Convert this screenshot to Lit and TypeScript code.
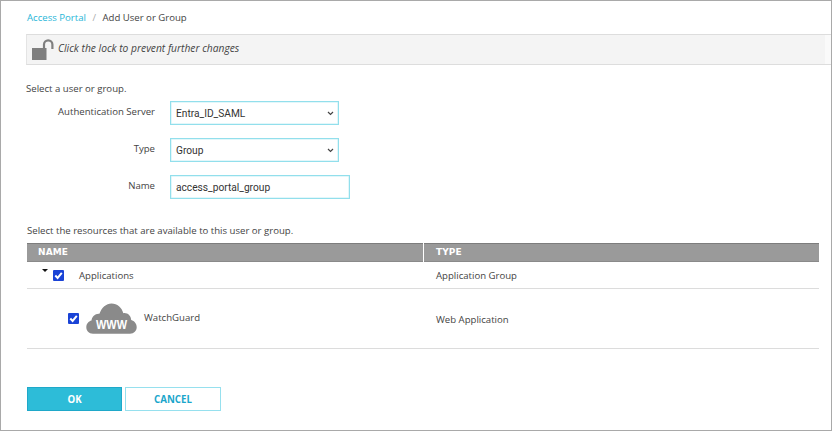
import { LitElement, html, css } from "lit";
import { customElement } from "lit/decorators.js";

const chevron = html`<svg class="chev" width="7" height="5" viewBox="0 0 7 5"><path d="M1 1l2.500 2.500L6 1" fill="none" stroke="#444" stroke-width="1.200"/></svg>`;
const check = html`<span class="cb"><svg width="11" height="11" viewBox="0 0 11 11"><path d="M2.300 5.500l2.300 2.400 4.200-5" fill="none" stroke="#fff" stroke-width="2"/></svg></span>`;

@customElement("app-root")
export class AppRoot extends LitElement {
  static styles = css`
    :host { display: block; width: 832px; height: 431px; box-sizing: border-box; border: 1px solid #a9a9a9; background: #fff; font-family: "Open Sans", sans-serif; font-size: 9.600px; color: #444; overflow: hidden; }
    .crumbs { display: flex; gap: 6.500px; padding: 9px 0 0 26px; height: 25px; box-sizing: border-box; line-height: 15px; }
    .crumbs a { color: #29b6d8; }
    .crumbs .sep { color: #aaa; }
    .lock { display: flex; align-items: center; gap: 1px; margin: 8px 0 0 25px; height: 31px; box-sizing: border-box; padding-left: 4px; background: linear-gradient(90deg, #f4f4f4 798px, #fafafa 798px); border-top: 1px solid #ddd; border-bottom: 1px solid #ddd; border-left: 1px solid #e4e4e4; font-style: italic; font-size: 10.250px; color: #444; }
    .lock svg { display: block; }
    .lock span { padding-bottom: 3px; }
    .intro { margin: 17px 0 0 25px; line-height: 14px; height: 14px; }
    .form { display: grid; grid-template-columns: 129px auto; column-gap: 15px; row-gap: 13px; margin: 5px 0 0 25px; justify-content: start; }
    .form label { text-align: right; align-self: center; padding-bottom: 3px; }
    .field { box-sizing: border-box; height: 24px; border: 1px solid #92dfec; box-shadow: inset 0 0 0 .5px #c8eff5; display: flex; align-items: center; justify-content: space-between; padding: 0 4px 0 5px; font-family: "Roboto", sans-serif; font-size: 10.200px; color: #333; }
    .sel { width: 169px; }
    .inp { width: 180px; }
    .chev { display: block; }
    .intro2 { margin: 25px 0 0 26px; line-height: 14px; height: 14px; }
    .table { margin: 5px 12px 0 26px; }
    .head { display: grid; grid-template-columns: 396px 1fr; gap: 1px; height: 19px; }
    .head div { background: #9a9a9a; border-top: 1px solid #7d7d7d; border-bottom: 1px solid #8a8a8a; box-sizing: border-box; color: #fff; font-family: "DejaVu Sans", sans-serif; font-weight: 700; font-size: 9px; line-height: 16px; padding-left: 11px; letter-spacing: .1px; }
    .head div:last-child { padding-left: 12px; }
    .row { display: grid; grid-template-columns: 397px 1fr; border-bottom: 1px solid #dcdcdc; box-sizing: border-box; }
    .r1 { height: 27px; }
    .r2 { height: 60px; }
    .r2 .type { padding-top: 1px; }
    .name { display: flex; align-items: center; }
    .r1 .name { padding-left: 15px; }
    .r2 .name { padding-left: 41px; }
    .type { align-self: center; padding-left: 12px; }
    .caret { width: 0; height: 0; border: solid transparent; border-width: 3px 3px 0; border-top-color: #111; margin: 0 5px 9px 0; }
    .cb { width: 11px; height: 11px; background: #1a43d6; border-radius: 1px; display: block; flex: none; }
    .cb svg { display: block; }
    .r1 .cb { margin-top: 1px; }
    .r1 .txt { margin-left: 15px; }
    .r2 .cloud { margin-left: 7px; display: block; }
    .r2 .txt { margin: 0 0 3px 7px; }
    .btns { display: flex; gap: 3px; margin: 38px 0 0 26px; }
    .btn { box-sizing: border-box; width: 95px; height: 24px; display: flex; align-items: center; justify-content: center; font-weight: 700; font-size: 9.700px; padding-top: 1px; }
    .ok { background: #2dbcd8; border: 1px solid #1fa8c9; color: #fff; }
    .cancel { border: 1px solid #96e0ee; color: #1ba6cb; background: #fff; width: 96px; }
  `;

  render() {
    return html`
      <div class="crumbs"><a>Access Portal</a><span class="sep">/</span><span>Add User or Group</span></div>
      <div class="lock">
        <svg width="26" height="22" viewBox="0 0 26 22">
          <rect x="1" y="9" width="14.500" height="12" fill="#7f7f7f"/>
          <path d="M13 9V5.500a4.200 4.200 0 0 1 8.400 0V10" fill="none" stroke="#7f7f7f" stroke-width="2.200"/>
        </svg>
        <span>Click the lock to prevent further changes</span>
      </div>
      <div class="intro">Select a user or group.</div>
      <div class="form">
        <label>Authentication Server</label>
        <div class="field sel"><span>Entra_ID_SAML</span>${chevron}</div>
        <label>Type</label>
        <div class="field sel"><span>Group</span>${chevron}</div>
        <label>Name</label>
        <div class="field inp"><span>access_portal_group</span></div>
      </div>
      <div class="intro2">Select the resources that are available to this user or group.</div>
      <div class="table">
        <div class="head"><div>NAME</div><div>TYPE</div></div>
        <div class="row r1">
          <div class="name"><span class="caret"></span>${check}<span class="txt">Applications</span></div>
          <div class="type">Application Group</div>
        </div>
        <div class="row r2">
          <div class="name">${check}
            <svg class="cloud" width="51" height="31" viewBox="0 0 51 31">
              <path d="M7 30.800C2.800 30.800 .3 27.700 .3 24.300c0-3.300 2.200-6 5.200-6.700C5.800 13.500 9.500 10.300 13.400 10.800 15.600 4.500 20.200.4 25.500.4c5.700 0 10.400 4 11.800 9.800 4.200-.6 7.600 2.300 7.900 6.900 3.300.9 5.500 3.800 5.500 7.200 0 3.500-2.700 6.500-6.700 6.500z" fill="#8a8a8a"/>
              <text x="25.500" y="26" text-anchor="middle" textLength="31" lengthAdjust="spacingAndGlyphs" font-family="Liberation Sans, sans-serif" font-weight="700" font-size="12.500" fill="#fff">WWW</text>
            </svg>
            <span class="txt">WatchGuard</span></div>
          <div class="type">Web Application</div>
        </div>
      </div>
      <div class="btns"><div class="btn ok">OK</div><div class="btn cancel">CANCEL</div></div>
    `;
  }
}
